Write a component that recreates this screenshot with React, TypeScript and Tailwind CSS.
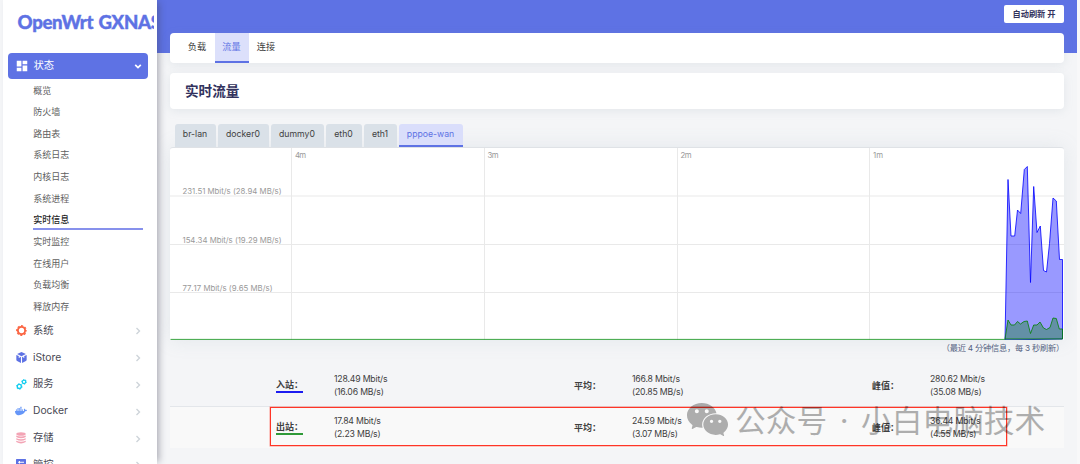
import type { ReactNode } from "react";
import { MdDashboard } from "react-icons/md";
import { FaDocker } from "react-icons/fa";
import { AiFillWechat } from "react-icons/ai";

const statusItems = ["概览", "防火墙", "路由表", "系统日志", "内核日志", "系统进程", "实时信息", "实时监控", "在线用户", "负载均衡", "释放内存"];

function GearIcon() {
  return (
    <svg viewBox="0 0 20 20" className="h-[11px] w-[11px]" fill="none" stroke="#fb6340">
      <circle cx="10" cy="10" r="6.6" strokeWidth="3.4" />
      <circle cx="10" cy="10" r="8.7" strokeWidth="2.2" strokeDasharray="3.8 3.033" strokeDashoffset="1.9" />
    </svg>
  );
}

function CubeIcon() {
  return (
    <svg viewBox="0 0 20 20" className="h-[11px] w-[11px]" fill="#5e72e4">
      <path d="M10 0 18 3.6 10 7.6 2 3.6Z" />
      <path d="M.6 5.3 5 7.4V11l2-1V8.4l2 1V20L2 16.2Q.6 15.4.6 14Z" />
      <path d="M19.4 5.3 15 7.4V11l-2-1V8.4l-2 1V20l7-3.8q1.4-.8 1.4-2.2Z" />
    </svg>
  );
}

function GearsIcon() {
  return (
    <svg viewBox="0 0 20 20" className="h-[11px] w-[11px]" fill="none" stroke="#11cdef">
      <circle cx="6" cy="13.6" r="3.7" strokeWidth="2.4" />
      <circle cx="6" cy="13.6" r="5.2" strokeWidth="1.6" strokeDasharray="2.2 3.25" />
      <circle cx="14.6" cy="5.2" r="3.2" strokeWidth="2.2" />
      <circle cx="14.6" cy="5.2" r="4.5" strokeWidth="1.5" strokeDasharray="2 2.7" />
    </svg>
  );
}

function StorageIcon() {
  return (
    <svg viewBox="0 0 20 24" className="h-[12px] w-[10px]" fill="#f3a4b5">
      <ellipse cx="10" cy="4" rx="9.5" ry="3.6" />
      <path d="M.5 7.2q9.5 4 19 0v2.6q-9.5 5-19 0Z" />
      <path d="M.5 12.4q9.5 4 19 0V15q-9.5 5-19 0Z" />
      <path d="M.5 17.6q9.5 4 19 0v2.6q-9.5 5.4-19 0Z" />
    </svg>
  );
}

function ControlIcon() {
  return (
    <svg viewBox="0 0 20 20" className="h-[10px] w-[10px]">
      <rect width="20" height="20" rx="1" fill="#5e72e4" />
      <path d="M4 6.5h12M7 4v5M4 13.5h12M13 11v5" stroke="#fff" strokeWidth="2" />
    </svg>
  );
}

const sections: { label: string; icon: ReactNode }[] = [
  { label: "系统", icon: <GearIcon /> },
  { label: "iStore", icon: <CubeIcon /> },
  { label: "服务", icon: <GearsIcon /> },
  { label: "Docker", icon: <FaDocker className="h-[12px] w-[12px] text-[#6596f8]" /> },
  { label: "存储", icon: <StorageIcon /> },
  { label: "管控", icon: <ControlIcon /> },
];

const devices = [
  { name: "br-lan", width: "w-[41px]" },
  { name: "docker0", width: "w-[51px]" },
  { name: "dummy0", width: "w-[53px]" },
  { name: "eth0", width: "w-[36px]" },
  { name: "eth1", width: "w-[33px]" },
];

const inbound = "835,192 838,31.5 841,88 844.7,88 847.5,62 850.7,65.5 854.3,21.5 857.3,18.5 860.5,134.5 863.7,38.5 867,84.5 870.3,78 873.5,122.5 876.5,124 879.5,95.5 883,50 886.3,53 889.5,111.5 892.5,111.5 892.5,191";
const outbound = "835,191 838,172 841,177 844.5,177 847.5,173.5 850.5,176 854,173.5 857.3,173 860.5,185.5 863.7,177 867,177 870,174 873.5,180 876.5,181.5 880,179.5 883,170 886.3,170.5 889.3,181 892.5,181 892.5,191";

function Sidebar() {
  return (
    <aside className="relative z-10 ml-[3px] h-[464px] w-[154px] shrink-0 bg-white shadow-[4px_0_7px_-2px_rgba(60,60,80,0.4)]">
      <div className="h-[53px] w-[151px] overflow-hidden whitespace-nowrap pl-[14.5px] pt-[8px] font-['Lato'] text-[18.6px] font-black leading-[28px] tracking-[-0.3px] text-[#5e72e4] [-webkit-text-stroke:0.4px_#5e72e4]">
        OpenWrt <span className="ml-[1px]">GXNAS</span>
      </div>
      <div className="ml-[5px] flex h-[26px] w-[140px] items-center rounded-[4px] bg-[#5e72e4] pl-[7px] pr-[5px] text-white">
        <MdDashboard className="h-[14px] w-[14px]" />
        <span className="ml-[4.5px] text-[10.3px]">状态</span>
        <svg viewBox="0 0 10 10" className="ml-auto h-[10px] w-[10px]" fill="none" stroke="white" strokeWidth="1.7">
          <path d="m2.2 3.8 2.8 2.8 2.8-2.8" />
        </svg>
      </div>
      <ul className="ml-[30.3px] w-[110px] text-[9px] text-[#606060]">
        {statusItems.map((item) => (
          <li
            key={item}
            className={
              item === "实时信息"
                ? "flex h-[21.65px] items-center border-b-2 border-[#8791ec] pt-[2px] font-medium text-[#1c1c1c]"
                : "flex h-[21.65px] items-center pt-[1px]"
            }
          >
            {item}
          </li>
        ))}
      </ul>
      <ul className="text-[10.3px] text-[#4a4a55]">
        {sections.map((s) => (
          <li key={s.label} className="flex h-[26.8px] items-center pl-[12px] pr-[14px]">
            <span className="flex w-[12px] justify-center">{s.icon}</span>
            <span className="ml-[6px]">{s.label}</span>
            <svg viewBox="0 0 10 10" className="ml-auto mt-[2px] h-[10px] w-[10px]" fill="none" stroke="#ced4da" strokeWidth="1.4">
              <path d="m3.5 2 3 3-3 3" />
            </svg>
          </li>
        ))}
      </ul>
    </aside>
  );
}

function Chart() {
  return (
    <div className="h-[193px] w-[894px] rounded-t-[3px] border-t border-[#dfe2e6] bg-white shadow-[0_0_20px_rgba(136,152,170,0.15)]">
      <svg width="894" height="192" viewBox="0 0 894 192" className="block [font-kerning:none]" fontFamily="Inter, sans-serif" fontSize="7.8" fill="#999">
        <path d="M0 48H894M0 96.5H894M0 144.5H894M121.5 0V192M314.5 0V192M507.5 0V192M699.5 0V192" stroke="#e9e9e9" fill="none" />
        <text x="125" y="9.5" textLength="11">4m</text>
        <text x="317.5" y="9.5" textLength="11">3m</text>
        <text x="510.5" y="9.5" textLength="11">2m</text>
        <text x="703" y="9.5" textLength="10">1m</text>
        <text x="12.5" y="46" textLength="99">231.51 Mbit/s (28.94 MB/s)</text>
        <text x="12.5" y="94.5" textLength="99">154.34 Mbit/s (19.29 MB/s)</text>
        <text x="12.5" y="142.5" textLength="90">77.17 Mbit/s (9.65 MB/s)</text>
        <polygon points={inbound} fill="#0000ff" fillOpacity=".4" stroke="#0000ff" strokeWidth=".8" />
        <polygon points={outbound} fill="#008000" fillOpacity=".35" stroke="#008000" strokeWidth=".8" />
        <path d="M.5 191.4H835" stroke="#249a2c" strokeWidth=".9" />
      </svg>
    </div>
  );
}

function Stat({ label, rate, bytes, line }: { label: string; rate: string; bytes: string; line?: string }) {
  return (
    <div className="flex w-[298px] shrink-0 items-center">
      <div className="w-[58px] text-[9px] font-bold leading-[12px] text-[#404040]">
        <span className={line ? `inline-block w-[27px] border-b-2 ${line}` : "inline-block w-[27px]"}>{label}</span>
      </div>
      <div className="whitespace-nowrap text-[8.7px] leading-[12.4px] tracking-[-0.18px] text-[#404040]">
        {rate}
        <br />
        {bytes}
      </div>
    </div>
  );
}

export default function App() {
  return (
    <div className="relative flex h-[464px] w-[1080px] overflow-hidden bg-[#f4f5f7] font-['Inter','Noto_Sans_CJK_SC',sans-serif]">
      <Sidebar />
      <main className="h-[464px] w-[920px] shrink-0 bg-[linear-gradient(#5e72e4_0_53.5px,transparent_53.5px)] pl-[13px]">
        <div className="flex h-[33px] w-[894px] justify-end pt-[5px]">
          <button className="flex h-[18px] w-[60px] items-center justify-center rounded-[2px] bg-white text-[8.2px] font-bold text-[#32325d]">自动刷新 开</button>
        </div>
        <nav className="flex h-[30px] w-[894px] rounded-[4px] bg-white pl-[9.5px] text-[9.2px] text-[#404040] shadow-[0_2px_10px_rgba(136,152,170,0.15)]">
          <span className="flex w-[35px] items-center justify-center pb-[2px]">负载</span>
          <span className="flex w-[34px] items-center justify-center border-b-2 border-[#5e72e4] bg-[#dce0fb] text-[#5e72e4]">流量</span>
          <span className="flex w-[35px] items-center justify-center pb-[2px]">连接</span>
        </nav>
        <h2 className="mt-[10px] flex h-[36px] w-[894px] items-center rounded-[4px] bg-white pl-[15px] text-[13.6px] font-bold text-[#32325d] shadow-[0_2px_10px_rgba(136,152,170,0.15)]">
          实时流量
        </h2>
        <div className="mt-[15px] flex h-[23px] gap-[2px] pl-[4.5px] text-[8.7px] text-[#404040]">
          {devices.map((d) => (
            <span key={d.name} className={`flex items-center justify-center rounded-t-[3px] bg-[#dae1e8] pb-[2px] ${d.width}`}>
              {d.name}
            </span>
          ))}
          <span className="flex w-[64px] items-center justify-center rounded-t-[3px] border-b-2 border-[#5e72e4] bg-[#dadefb] text-[#5e72e4]">pppoe-wan</span>
        </div>
        <Chart />
        <div className="flex h-[24px] w-[894px] justify-end pt-[1px] text-[8.2px] leading-[15px] tracking-[-0.2px] text-[#525f7f]">（最近 4 分钟信息，每 3 秒刷新）</div>
        <div className="flex h-[42px] w-[894px] pl-[106px] pt-[1px]">
          <Stat label="入站：" rate="128.49 Mbit/s" bytes="(16.06 MB/s)" line="border-[#1c1cf0]" />
          <Stat label="平均：" rate="166.8 Mbit/s" bytes="(20.85 MB/s)" />
          <Stat label="峰值：" rate="280.62 Mbit/s" bytes="(35.08 MB/s)" />
        </div>
        <div className="flex h-[42px] w-[894px] overflow-hidden border-t border-[#e3e6ea] bg-[#f9f9f9] pl-[106px]">
          <Stat label="出站：" rate="17.84 Mbit/s" bytes="(2.23 MB/s)" line="border-[#2f9a38]" />
          <Stat label="平均：" rate="24.59 Mbit/s" bytes="(3.07 MB/s)" />
          <Stat label="峰值：" rate="36.44 Mbit/s" bytes="(4.55 MB/s)" />
        </div>
      </main>
      <div className="w-[3px] shrink-0 bg-[#f8f8f9]" />
      <div className="absolute left-[270px] top-[407px] h-[39px] w-[737px] border border-[#ff3526] shadow-[0_0_0_0.5px_rgba(255,53,38,0.5)]" />
      <div className="absolute left-[684px] top-[396px] flex h-[50px] items-center whitespace-nowrap text-[#000000] opacity-30">
        <AiFillWechat className="mb-[4px] h-[47px] w-[47px]" />
        <span className="ml-[4px] flex text-[30.7px] font-normal leading-[50px]">
          <span>公众号</span>
          <span className="w-[34px] text-center">·</span>
          <span>小白电脑技术</span>
        </span>
      </div>
    </div>
  );
}
